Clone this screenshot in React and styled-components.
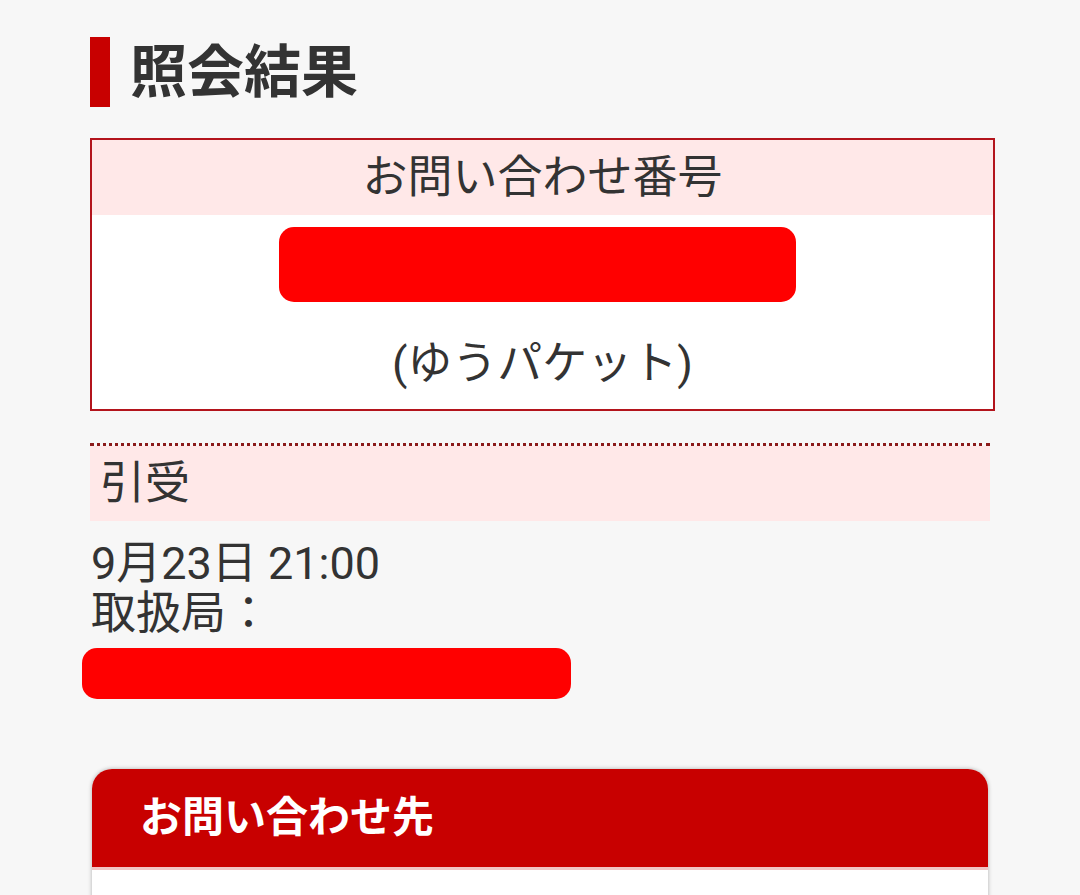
import React from "react";
import styled, { createGlobalStyle } from "styled-components";

const GlobalStyle = createGlobalStyle`
  html, body {
    margin: 0;
    padding: 0;
    background: #f7f7f7;
  }
  body {
    font-family: Roboto, "Noto Sans CJK JP", sans-serif;
    color: #333;
  }
`;

const Page = styled.div`
  padding: 37px 85px 0 90px;
  height: 895px;
  box-sizing: border-box;
  overflow: hidden;
`;

const TitleRow = styled.div`
  display: flex;
  align-items: center;
  gap: 20px;
  height: 70px;
`;

const TitleBar = styled.span`
  width: 20px;
  height: 70px;
  background: #c80000;
`;

const Title = styled.h1`
  margin: 0;
  font-size: 57px;
  font-weight: 700;
  line-height: 1;
  color: #333;
`;

const NumberBox = styled.div`
  margin-top: 31px;
  border: 2px solid #b3141c;
  background: #fff;
`;

const NumberHead = styled.div`
  height: 75px;
  line-height: 75px;
  background: #ffe8e8;
  text-align: center;
  font-size: 45px;
`;

const NumberBody = styled.div`
  display: flex;
  flex-direction: column;
  align-items: center;
  padding: 12px 0 5px;
`;

const Redacted = styled.div`
  width: ${(p) => p.w}px;
  height: ${(p) => p.h}px;
  margin-left: ${(p) => p.offset || 0}px;
  background: #ff0000;
  border-radius: 15px;
`;

const Service = styled.div`
  padding-top: 22px;
  line-height: 80px;
  font-size: 45px;
`;

const StatusSection = styled.div`
  margin-top: 32px;
  width: 900px;
  border-top: 3px dotted #8b1a1a;
`;

const StatusHead = styled.div`
  height: 75px;
  line-height: 75px;
  padding-left: 10px;
  background: #ffe8e8;
  font-size: 45px;
`;

const StatusText = styled.div`
  margin-top: 18px;
  padding-left: 1px;
  font-size: 45px;
  line-height: 50px;
`;

const RedactedRow = styled.div`
  margin-top: 9px;
`;

const Card = styled.div`
  margin: 70px 0 0 2px;
  width: 896px;
  border-radius: 20px 20px 0 0;
  box-shadow: 0 0 4px rgba(0, 0, 0, 0.3);
  background: #fff;
  overflow: hidden;
`;

const CardHead = styled.div`
  height: 98px;
  line-height: 98px;
  padding-left: 48px;
  background: #c80000;
  border-bottom: 3px solid #f2c4c4;
  color: #fff;
  font-size: 42px;
  font-weight: 700;
`;

const CardBody = styled.div`
  height: 120px;
`;

export default function App() {
  return (
    <>
      <GlobalStyle />
      <Page>
        <TitleRow>
          <TitleBar />
          <Title>照会結果</Title>
        </TitleRow>

        <NumberBox>
          <NumberHead>お問い合わせ番号</NumberHead>
          <NumberBody>
            <Redacted w={517} h={75} offset={-10} />
            <Service>(ゆうパケット)</Service>
          </NumberBody>
        </NumberBox>

        <StatusSection>
          <StatusHead>引受</StatusHead>
        </StatusSection>
        <StatusText>
          9月23日 21:00
          <br />
          取扱局：
        </StatusText>
        <RedactedRow>
          <Redacted w={489} h={51} offset={-8} />
        </RedactedRow>

        <Card>
          <CardHead>お問い合わせ先</CardHead>
          <CardBody />
        </Card>
      </Page>
    </>
  );
}
